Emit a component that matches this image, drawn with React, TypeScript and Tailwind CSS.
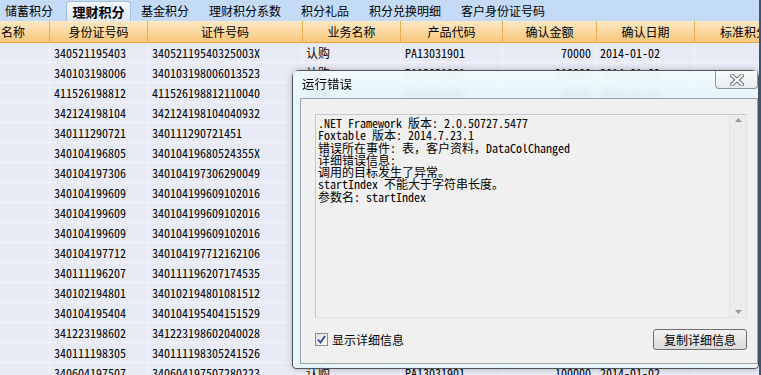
import React from 'react';

const tabs = ['储蓄积分', '理财积分', '基金积分', '理财积分系数', '积分礼品', '积分兑换明细', '客户身份证号码'];

const columns = [
    { title: '名称', align: 'text-left pl-[1px]' },
    { title: '身份证号码', align: 'text-center' },
    { title: '证件号码', align: 'text-center' },
    { title: '业务名称', align: 'text-center' },
    { title: '产品代码', align: 'text-center' },
    { title: '确认金额', align: 'text-center' },
    { title: '确认日期', align: 'text-center' },
    { title: '标准积分', align: 'text-left pl-[25px]' },
];

const rows: string[][] = [
    ['340521195403', '34052119540325003X', '认购', 'PA13031901', '70000', '2014-01-02'],
    ['340103198006', '340103198006013523', '认购', 'PA13031901', '210000', '2014-01-02'],
    ['411526198812', '411526198812110040', '认购', 'PA13031901', '50000', '2014-01-02'],
    ['342124198104', '342124198104040932', '认购', 'PA13031901', '100000', '2014-01-02'],
    ['340111290721', '340111290721451', '认购', 'PA13031901', '50000', '2014-01-02'],
    ['340104196805', '34010419680524355X', '认购', 'PA13031901', '100000', '2014-01-02'],
    ['340104197306', '340104197306290049', '认购', 'PA13031901', '50000', '2014-01-02'],
    ['340104199609', '340104199609102016', '认购', 'PA13031901', '50000', '2014-01-02'],
    ['340104199609', '340104199609102016', '认购', 'PA13031901', '50000', '2014-01-02'],
    ['340104199609', '340104199609102016', '认购', 'PA13031901', '50000', '2014-01-02'],
    ['340104197712', '340104197712162106', '认购', 'PA13031901', '100000', '2014-01-02'],
    ['340111196207', '340111196207174535', '认购', 'PA13031901', '50000', '2014-01-02'],
    ['340102194801', '340102194801081512', '认购', 'PA13031901', '50000', '2014-01-02'],
    ['340104195404', '340104195404151529', '认购', 'PA13031901', '100000', '2014-01-02'],
    ['341223198602', '341223198602040028', '认购', 'PA13031901', '50000', '2014-01-02'],
    ['340111198305', '340111198305241526', '认购', 'PA13031901', '50000', '2014-01-02'],
    ['340604197507', '340604197507280223', '认购', 'PA13031901', '100000', '2014-01-02'],
];

const errorLines = [
    '.NET Framework 版本: 2.0.50727.5477',
    'Foxtable 版本: 2014.7.23.1',
    '错误所在事件: 表，客户资料，DataColChanged',
    '详细错误信息:',
    '调用的目标发生了异常。',
    'startIndex 不能大于字符串长度。',
    '参数名: startIndex',
];

const gridCols = 'grid grid-cols-[50px_98px_155px_98px_102px_94px_98px_66px]';
const mono = "font-['Noto_Sans_Mono_CJK_SC','Liberation_Mono','Noto_Sans_CJK_SC',monospace]";
const sans = "font-['Noto_Sans_CJK_SC','Liberation_Sans',sans-serif]";

const CloseGlyph: React.FC = () => (
    <svg width="14" height="12" viewBox="0 0 14 12">
        <path d="M2 1.5 L12 10.5 M12 1.5 L2 10.5" stroke="#6e6e6e" strokeWidth="4" strokeLinecap="square" />
        <path d="M2 1.5 L12 10.5 M12 1.5 L2 10.5" stroke="#ffffff" strokeWidth="2" strokeLinecap="square" />
    </svg>
);

const ErrorDialog: React.FC = () => (
    <div className="absolute left-[292px] top-[70px] w-[467px] h-[299px] rounded-t-[7px] rounded-b-[4px] border border-[#4e5358] bg-[#e9f8fb]/80 backdrop-blur-[3px] shadow-[0_0_6px_rgba(0,0,0,0.25)] flex flex-col">
        <div className="h-[27px] flex items-center justify-between pl-[9px] bg-gradient-to-b from-[#f4fdfe]/70 to-[#e2f6f9]/40">
            <span className={`${sans} text-[12.5px] text-black`}>运行错误</span>
            <div className="self-start w-[43px] h-[18px] border border-t-0 border-[#8d9398] rounded-b-[4px] bg-gradient-to-b from-[#f8fcfd] to-[#e6eef1] flex items-center justify-center">
                <CloseGlyph />
            </div>
        </div>
        <div className="flex-1 ml-[7px] mb-[4px] border border-[#9aa3aa] bg-[#f0f0f0] flex flex-col pl-[14px] pr-[10px] pt-[15px]">
            <div className="h-[204px] flex border border-[#c8c8c8] border-r-[#e3e3e3] border-b-[#e3e3e3] bg-[#f0f0f0]">
                <div className={`${mono} flex-1 pl-[2px] pt-[2px] text-[12px] leading-[12.3px] text-black whitespace-pre`}>
                    {errorLines.map((line, i) => (
                        <div key={i}>{line}</div>
                    ))}
                </div>
                <div className="w-[17px] border-l border-[#e2e2e2] bg-[#ececec] flex flex-col items-center justify-between py-[3px]">
                    <svg width="7" height="4" viewBox="0 0 7 4"><path d="M0 4 L3.5 0 L7 4 Z" fill="#9a9a9a" /></svg>
                    <svg width="7" height="4" viewBox="0 0 7 4"><path d="M0 0 L3.5 4 L7 0 Z" fill="#9a9a9a" /></svg>
                </div>
            </div>
            <div className="flex items-center justify-between mt-[11px]">
                <label className={`${sans} flex items-center gap-[4px] text-[12px] text-black`}>
                    <span className="w-[13px] h-[13px] border border-[#8e8f8f] bg-gradient-to-br from-[#dcdcdc] to-[#ffffff] flex items-center justify-center">
                        <svg width="9" height="9" viewBox="0 0 9 9">
                            <path d="M1 4.5 L3.5 7.5 L8 1" stroke="#2d4a9c" strokeWidth="1.8" fill="none" />
                        </svg>
                    </span>
                    显示详细信息
                </label>
                <button className={`${sans} w-[94px] h-[21px] border border-[#707070] rounded-[3px] bg-gradient-to-b from-[#f3f3f3] to-[#dadada] text-[12px] text-black leading-none`}>
                    复制详细信息
                </button>
            </div>
        </div>
    </div>
);

const App: React.FC = () => {
    return (
        <div className="relative w-[761px] h-[375px] overflow-hidden bg-[#e8ebf5] border-r-[2px] border-[#3e5470]">
            <div className={`${sans} h-[21px] flex items-end bg-[#c4dbf8] pl-[0px] text-[12px] text-black`}>
                {tabs.map((tab, i) =>
                    i === 1 ? (
                        <div key={tab} className="h-[20px] w-[65px] flex items-center justify-center border border-b-0 border-[#a5bedd] rounded-t-[3px] bg-gradient-to-b from-[#f3f7fc] to-[#dde7f4] font-bold text-[13px]">
                            {tab}
                        </div>
                    ) : (
                        <div key={tab} className={`h-[20px] flex items-center ${i === 0 ? 'pl-[5px] pr-[13px]' : 'px-[10px]'}`}>
                            {tab}
                        </div>
                    )
                )}
            </div>

            <div className={`${gridCols} h-[22px] border-b border-[#f0a544] bg-gradient-to-b from-[#fde9c6] to-[#f8c77a]`}>
                {columns.map((col) => (
                    <div key={col.title} className={`${sans} ${col.align} text-[12px] leading-[21px] text-black border-r border-[#f0ac55] whitespace-nowrap overflow-hidden`}>
                        {col.title}
                    </div>
                ))}
            </div>

            {rows.map((row, r) => (
                <div key={r} className={`${gridCols} h-[20px] ${mono} text-[12px] leading-[19px] text-black`}>
                    <div className="border-r border-b border-[#f3f4f9]" />
                    <div className="pl-[4px] border-r border-b border-[#f3f4f9]">{row[0]}</div>
                    <div className="pl-[4px] border-r border-b border-[#f3f4f9]">{row[1]}</div>
                    <div className="pl-[3px] border-r border-b border-[#f3f4f9]">{row[2]}</div>
                    <div className="pl-[4px] border-r border-b border-[#f3f4f9]">{row[3]}</div>
                    <div className="pr-[5px] text-right border-r border-b border-[#f3f4f9]">{row[4]}</div>
                    <div className="pl-[3px] border-r border-b border-[#f3f4f9]">{row[5]}</div>
                    <div className="border-b border-[#f3f4f9]" />
                </div>
            ))}

            <ErrorDialog />
        </div>
    );
};

export default App;
